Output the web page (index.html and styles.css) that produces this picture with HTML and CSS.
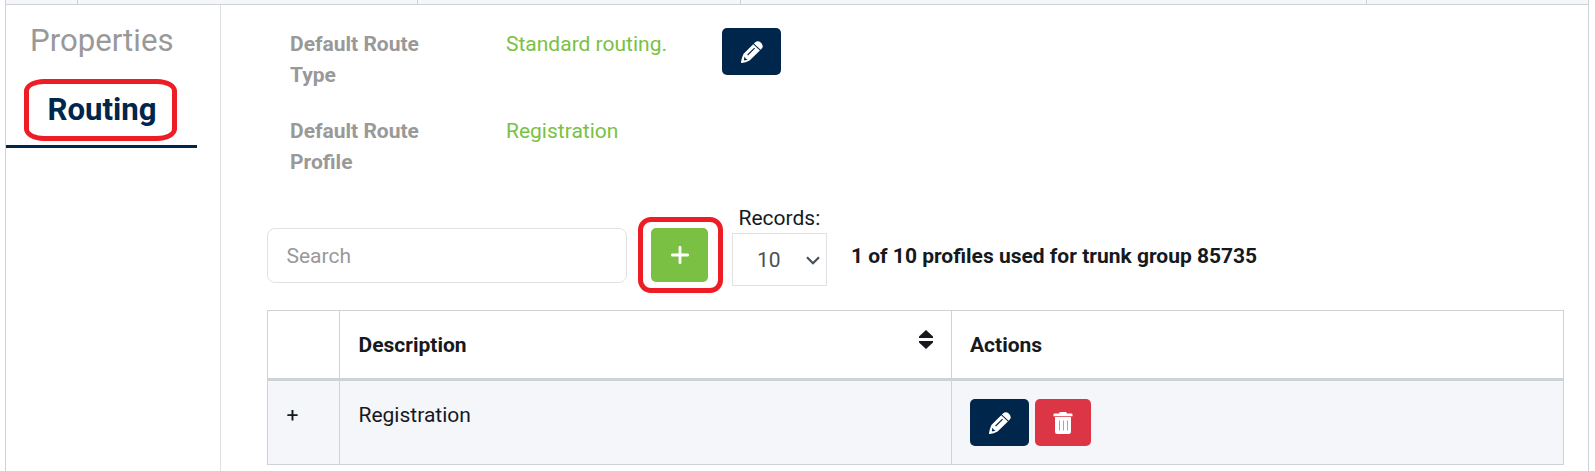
FILE: index.html
```
<!DOCTYPE html>
<html lang="en">
<head>
<meta charset="utf-8">
<title>Trunk group routing</title>
<link rel="stylesheet" href="styles.css">
</head>
<body>
<svg class="sprite" aria-hidden="true">
  <symbol id="pencil" viewBox="0 0 22 22">
    <path d="M14 1.4Q16.8 -.9 20 1.8Q22.9 4.8 20.8 7.6L19.6 8.8L12.9 2.5Z"/>
    <path fill-rule="evenodd" d="M12.2 3.2L18.9 9.6L8.6 19.4Q4.8 21.4 .8 21.9Q-.1 21.9 0 21.1Q.6 17 2.4 13ZM13.2 6.8L6.2 13.6L7 14.4L14 7.6ZM3.7 15.4L2.8 18.6L3.6 19.4L6.6 18.4L4.6 17.6Z"/>
  </symbol>
</svg>
<div class="panel">
  <div class="strip"><span class="c1"></span><span class="c2"></span><span class="c3"></span><span class="c4"></span><span></span></div>
  <div class="body">
    <nav class="sidebar">
      <a class="tab">Properties</a>
      <a class="tab active">Routing<span class="mark mark-tab"></span></a>
    </nav>
    <main class="content">
      <dl class="details">
        <dt>Default Route Type</dt>
        <dd>Standard routing.</dd>
        <dd><button class="btn edit"><svg class="pencil"><use href="#pencil"/></svg></button></dd>
        <dt>Default Route Profile</dt>
        <dd>Registration</dd>
      </dl>
      <div class="toolbar">
        <input class="search" type="text" placeholder="Search">
        <button class="btn add"><svg class="plus" viewBox="0 0 18 18"><path d="M9 1.3V16.7M1.3 9H16.7"/></svg><span class="mark mark-add"></span></button>
        <div class="records">
          <span class="records-label">Records:</span>
          <div class="select"><span>10</span><svg class="chevron" viewBox="0 0 14 9"><path d="M1 1.2L7 7.2L13 1.2"/></svg></div>
        </div>
        <strong class="usage">1 of 10 profiles used for trunk group 85735</strong>
      </div>
      <div class="table">
        <div class="row head">
          <div class="cell"></div>
          <div class="cell sortable">Description<svg class="sort" viewBox="0 0 14 19"><path d="M7 0L14 6.5V8H0V6.5ZM0 11H14V12.5L7 19L0 12.5Z"/></svg></div>
          <div class="cell">Actions</div>
        </div>
        <div class="row item">
          <div class="cell">+</div>
          <div class="cell">Registration</div>
          <div class="cell actions">
            <button class="btn edit"><svg class="pencil"><use href="#pencil"/></svg></button>
            <button class="btn remove"><svg class="trash" viewBox="0 0 20 22"><path d="M7 0H13Q13.5 0 14 1.5H18.5Q19.5 1.5 19.5 2.5V4.2H.5V2.5Q.5 1.5 1.5 1.5H6Q6.5 0 7 0ZM2 5H18V19.5Q18 22 15.5 22H4.5Q2 22 2 19.5Z"/><path class="slots" d="M6.5 8.5V18.5M10.5 8.5V18.5M14.5 8.5V18.5"/></svg></button>
          </div>
        </div>
      </div>
    </main>
  </div>
</div>
</body>
</html>
```
FILE: styles.css
```
* { box-sizing: border-box; }
body { margin: 0; height: 471px; overflow: hidden; background: #fff; color: #16191d; font: 21px/31px Roboto, sans-serif; }
.sprite { display: none; }
.panel { margin-left: 5px; width: 1584px; height: 471px; border: solid #ced1d5; border-width: 0 1px; }
.strip { display: flex; height: 5px; background: #f4f6fa; border-bottom: 1px solid #ced1d5; }
.strip span { border-right: 1px solid #ced1d5; }
.strip span:last-child { border: 0; flex: 1; }
.c1 { width: 72px; }
.c2 { width: 340px; }
.c3 { width: 323px; }
.c4 { width: 626px; }
.body { display: flex; height: 466px; }
.sidebar { width: 215px; border-right: 1px solid #dfe2e5; padding-top: 9px; }
.tab { display: block; position: relative; width: 191px; height: 65px; padding-left: 24px; font-size: 31.2px; line-height: 54px; color: #999; }
.tab.active { height: 69px; padding-left: 41.5px; line-height: 62px; font-weight: 700; color: #00264b; border-bottom: 3px solid #00264b; }
.mark { position: absolute; border: 5px solid #ee1c24; }
.mark-tab { left: 18px; top: 0; width: 153px; height: 62px; border-radius: 20px / 12px; }
.content { flex: 1; padding: 24px 24px 0 46px; }
.details { margin: 0 0 0 23px; display: grid; grid-template-columns: 216px 216px 60px; grid-template-rows: 87px 88px; }
.details dt { width: 150px; font-weight: 700; color: #999; }
.details dd { margin: 0; color: #7ac143; }
.btn { display: flex; align-items: center; justify-content: center; position: relative; border: 0; border-radius: 5px; padding: 0; height: 47px; color: #fff; }
.details .btn { margin-top: -1px; }
.edit { width: 59px; background: #00264b; }
.pencil { width: 22px; height: 22px; fill: #fff; }
.toolbar { display: flex; height: 106px; }
.search { width: 360px; height: 55px; margin: 24px 24px 0 0; padding: 0 18.5px; border: 1px solid #e2e2e4; border-radius: 8px; font: 21px Roboto, sans-serif; }
.search::placeholder { color: #999; opacity: 1; }
.add { width: 57px; height: 54px; margin-top: 24px; background: #7ac143; }
.plus { width: 18px; height: 18px; stroke: #fff; stroke-width: 2.8; stroke-linecap: round; }
.mark-add { left: -13px; top: -11px; width: 85px; height: 76px; border-radius: 13px; }
.records { width: 95px; margin-left: 24px; }
.records-label { display: block; padding-left: 6.5px; height: 29px; line-height: 29px; }
.select { display: flex; align-items: center; justify-content: space-between; height: 53px; padding: 1px 6px 0 24px; border: 1px solid #e2e2e4; color: #495057; }
.chevron { width: 14px; height: 9px; fill: none; stroke: #43515c; stroke-width: 2.2; }
.usage { margin: 37px 0 0 24px; font-weight: 700; }
.table { border: 1px solid #ced1d5; width: 1297px; height: 155px; }
.row { display: grid; grid-template-columns: 72px 612px 1fr; }
.cell { padding: 19px 18px 19px 18.5px; border-right: 1px solid #ced1d5; position: relative; }
.cell:last-child { border-right: 0; padding-left: 18px; }
.head { height: 70px; border-bottom: 3px solid #ced1d5; font-weight: 700; }
.sortable { display: flex; justify-content: space-between; }
.sort { width: 14px; height: 19px; fill: #16191d; }
.item { height: 83px; background: #f4f6fa; }
.actions { display: flex; gap: 6px; padding-top: 18px; }
.remove { width: 56px; background: #dc3545; }
.trash { width: 20px; height: 22px; fill: #fff; }
.slots { stroke: #dc3545; stroke-width: 1; stroke-opacity: .6; }
```
